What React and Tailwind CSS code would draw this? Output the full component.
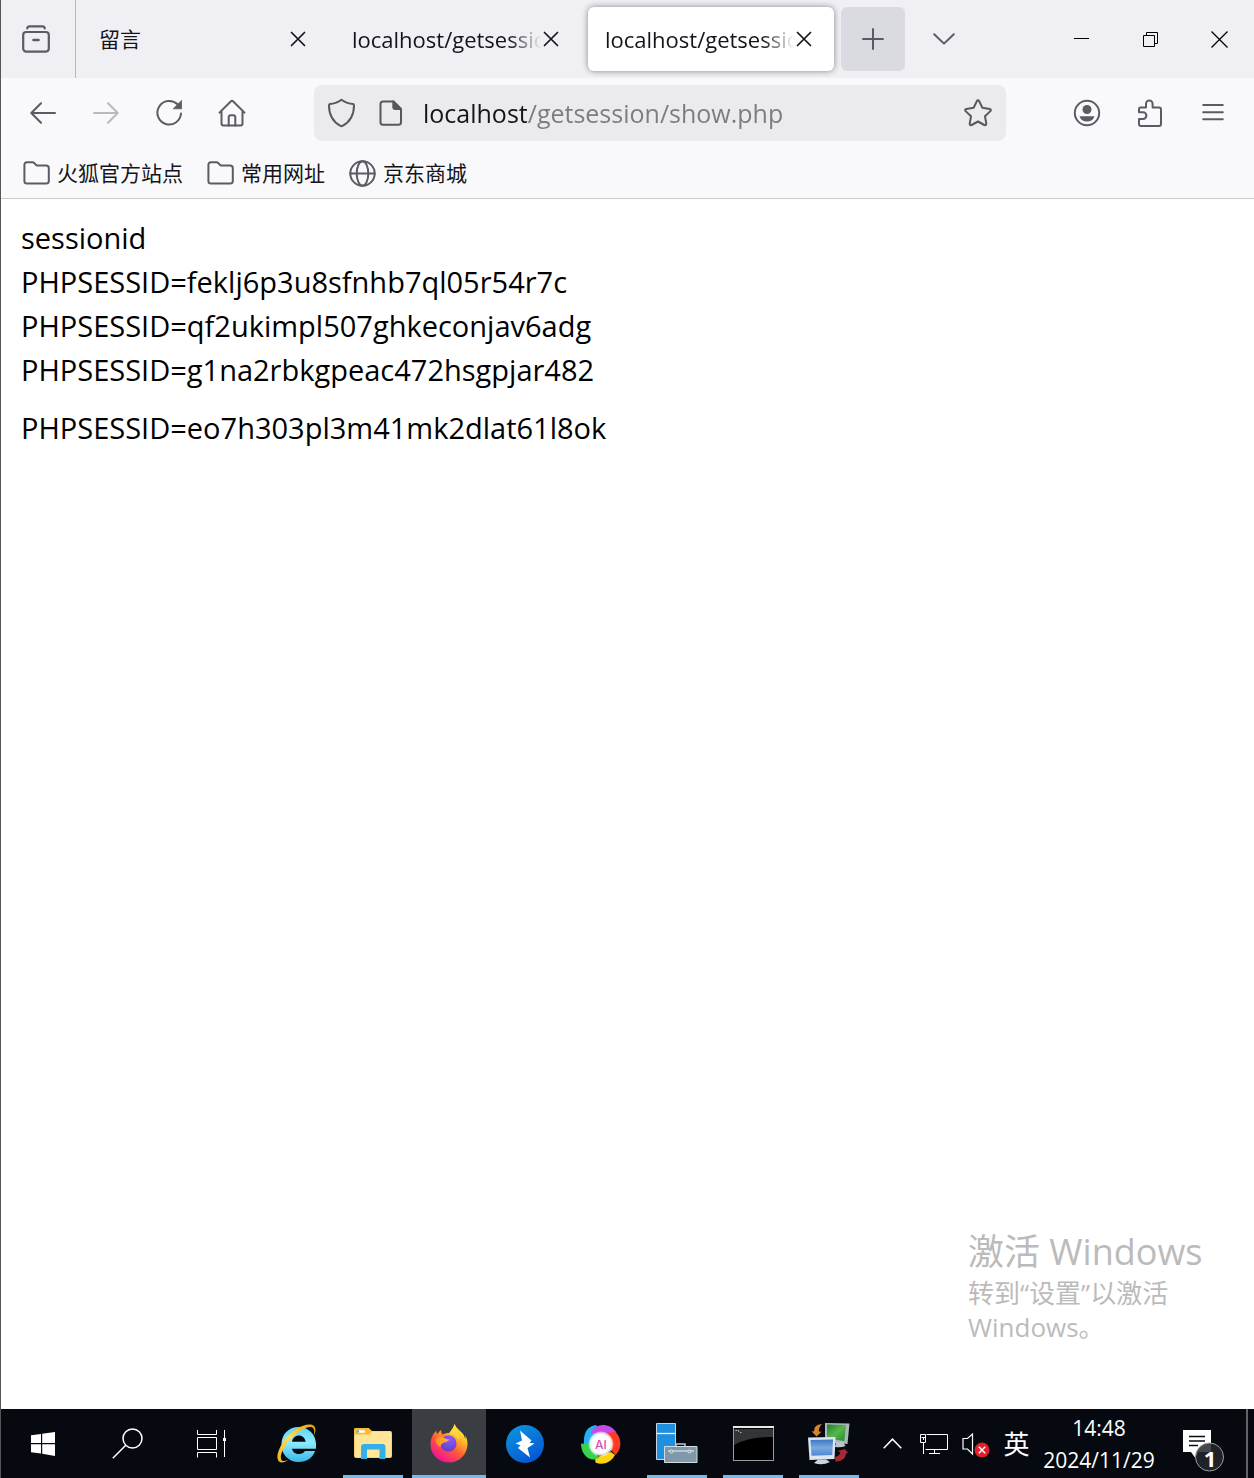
import React, { useState } from "react";

function Icon({ w, h, children, className = "", stroke = "currentColor", sw = 2 }) {
  return (
    <svg
      width={w}
      height={h}
      viewBox={`0 0 ${w} ${h}`}
      fill="none"
      stroke={stroke}
      strokeWidth={sw}
      strokeLinecap="round"
      strokeLinejoin="round"
      className={`shrink-0 ${className}`}
      aria-hidden="true"
    >
      {children}
    </svg>
  );
}

function Tab({ title, active, fade }) {
  return (
    <div
      className={
        active
          ? "flex h-16 w-[246px] min-w-0 items-center rounded-md bg-white pr-5 pl-[17px] shadow-[0_0_6px_rgba(0,0,0,0.45)]"
          : "flex h-16 w-[246px] min-w-0 items-center rounded-md pr-5 pl-[17px]"
      }
    >
      <span
        className={
          fade
            ? "min-w-0 flex-1 overflow-hidden text-[22px] leading-8 whitespace-nowrap [mask-image:linear-gradient(to_left,transparent,black_32px)]"
            : "min-w-0 flex-1 overflow-hidden text-[21px] leading-8 whitespace-nowrap"
        }
      >
        {title}
      </span>
      <button type="button" aria-label="关闭标签页" className="flex h-8 w-5 shrink-0 items-center justify-center">
        <Icon w={16} h={16} sw={1.7}>
          <path d="M1.5 1.5l13 13M14.5 1.5l-13 13" />
        </Icon>
      </button>
    </div>
  );
}

function ToolButton({ label, children, className = "" }) {
  return (
    <button type="button" aria-label={label} className={`flex h-14 w-[63px] items-center justify-center ${className}`}>
      {children}
    </button>
  );
}

function WindowButton({ label, children }) {
  return (
    <button type="button" aria-label={label} className="flex h-[78px] w-[69px] items-center justify-center text-black">
      {children}
    </button>
  );
}

function TabBar() {
  return (
    <header className="flex h-[78px] items-center bg-[#f0eff4] text-[#15141a]">
      <button
        type="button"
        aria-label="Firefox View"
        className="flex h-full w-[75px] shrink-0 items-center justify-center border-r border-[#b8b7bd] pr-1 text-[#5b5b66]"
      >
        <Icon w={28} h={28} sw={2.2}>
          <path d="M5.2 3.4C5.4 1.8 6.2 1.3 7.6 1.3h12.8c1.4 0 2.200.5 2.400 2.100" />
          <rect x="1.2" y="7" width="25.6" height="19.6" rx="3" />
          <path d="M11.5 15h5" strokeWidth="2.600" />
        </Icon>
      </button>
      <div className="flex min-w-0 flex-1 items-center gap-[7px] pl-1.5">
        <Tab title="留言" />
        <Tab title="localhost/getsession/" fade />
        <Tab title="localhost/getsession/show.php" fade active />
        <button
          type="button"
          aria-label="打开新标签页"
          className="flex h-16 w-16 shrink-0 items-center justify-center rounded-md bg-[#dadbe0] text-[#5b5b66]"
        >
          <Icon w={22} h={22}>
            <path d="M11 1v20M1 11h20" />
          </Icon>
        </button>
        <button type="button" aria-label="列出所有标签页" className="flex h-16 w-16 shrink-0 items-center justify-center text-[#5b5b66]">
          <Icon w={22} h={12}>
            <path d="M1.2 1.2L11 10.600l9.800-9.400" />
          </Icon>
        </button>
      </div>
      <div className="flex shrink-0">
        <WindowButton label="最小化">
          <svg width="15" height="2" viewBox="0 0 15 2" aria-hidden="true">
            <path d="M0 0h15v1H0z" />
          </svg>
        </WindowButton>
        <WindowButton label="还原">
          <svg width="15" height="15" viewBox="0 0 15 15" fill="none" stroke="black" aria-hidden="true">
            <path d="M.5 3.5h11v11H.5zM3.500 3V.5h11v11H12" />
          </svg>
        </WindowButton>
        <WindowButton label="关闭">
          <svg width="17" height="17" viewBox="0 0 17 17" fill="none" stroke="black" strokeWidth="1.300" aria-hidden="true">
            <path d="M.5.5l16 16M16.500.5l-16 16" />
          </svg>
        </WindowButton>
      </div>
    </header>
  );
}

function NavBar() {
  const [url, setUrl] = useState("localhost/getsession/show.php");
  return (
    <nav className="flex h-[70px] items-center px-2.5 text-[#5b5b66]">
      <ToolButton label="后退">
        <Icon w={26} h={22}>
          <path d="M25 11H1.500M11 1.300L1.300 11l9.700 9.700" />
        </Icon>
      </ToolButton>
      <ToolButton label="前进" className="text-[#b9b9be]">
        <Icon w={26} h={22}>
          <path d="M1 11h23.500M15 1.300l9.700 9.700-9.700 9.700" />
        </Icon>
      </ToolButton>
      <ToolButton label="重新载入">
        <Icon w={28} h={28}>
          <path d="M26 14.500A11.800 11.800 0 1 1 22.500 5.300" />
          <path d="M26.500 1.800v8h-8z" fill="currentColor" strokeWidth="0.800" />
        </Icon>
      </ToolButton>
      <ToolButton label="主页">
        <Icon w={28} h={28}>
          <path d="M1.500 13.600L13 2.200q1-1 2 0l11.500 11.400M3.500 12v12.500q0 2 2 2h17q2 0 2-2V12" />
          <path d="M10.700 26.500V18.500q0-2.200 2.200-2.200h2.200q2.200 0 2.200 2.200v8" />
        </Icon>
      </ToolButton>

      <div className="mr-[49px] ml-[51px] flex h-14 min-w-0 flex-1 items-center rounded-lg bg-[#ebebed] px-3.5 text-[#57575c]">
        <button type="button" aria-label="跟踪保护" className="shrink-0">
          <Icon w={27} h={30}>
            <path d="M13.500 1.800q6 4.200 11.500 4.200q1 .2 1 1.400c0 9-3.500 16-11.500 20.500q-1 .6-2 0C4.500 23.400 1 16.400 1 7.400Q1 6.200 2 6q5.500 0 11.500-4.200z" />
          </Icon>
        </button>
        <button type="button" aria-label="网站信息" className="ml-6 shrink-0">
          <Icon w={24} h={26}>
            <path d="M4 1.400h10.500l7.500 7.500v13.300q0 2.500-2.500 2.500H4q-2.500 0-2.500-2.500V3.900q0-2.500 2.500-2.500z" />
            <path d="M14.300 1.500v5.500q0 2 2 2h5.500z" fill="currentColor" />
          </Icon>
        </button>
        <input
          type="text"
          aria-label="地址栏"
          value={url}
          onChange={(e) => setUrl(e.target.value)}
          className="ml-5 h-12 min-w-0 flex-1 bg-[linear-gradient(90deg,#15141a_105px,#7b7b80_105px)] bg-clip-text text-[25px] text-transparent caret-[#15141a] outline-none"
        />
        <button type="button" aria-label="为此页添加书签" className="shrink-0">
          <Icon w={28} h={28}>
            <path d="M12.900 2.100q1.100-1.800 2.200 0l3.300 6.700 7.300 1.100q1.800.5.700 2.200l-5.400 5.200 1.300 7.400q0 1.900-1.900 1.300L14 22.500l-6.400 3.500q-1.900.6-1.900-1.300l1.300-7.400-5.400-5.200q-1.100-1.700.7-2.200l7.300-1.100z" />
          </Icon>
        </button>
      </div>

      <ToolButton label="账户">
        <Icon w={28} h={28}>
          <circle cx="14" cy="14" r="12.200" />
          <circle cx="14" cy="10.500" r="4.500" fill="currentColor" stroke="none" />
          <path d="M6.500 17.200h15q-1.800 5.300-7.500 5.300t-7.500-5.300z" fill="currentColor" stroke="none" />
        </Icon>
      </ToolButton>
      <ToolButton label="扩展">
        <Icon w={26} h={28}>
          <path d="M3.500 8.500H9V4.800a3.300 3.300 0 0 1 6.600 0v3.700h6.400q2 0 2 2v14.500q0 2-2 2H4q-2 0-2-2v-5h4a3.400 3.400 0 0 0 0-6.800H2v-2.700q0-2 1.500-2z" />
        </Icon>
      </ToolButton>
      <ToolButton label="打开应用程序菜单">
        <Icon w={22} h={20}>
          <path d="M1.200 2h19.600M1.200 9.200h19.600M1.200 16.300h19.600" />
        </Icon>
      </ToolButton>
    </nav>
  );
}

function FolderIcon() {
  return (
    <Icon w={27} h={24}>
      <path d="M4 1.200h5.500q1 0 1.700.8l2.300 2.400h9.700q2.600 0 2.600 2.600v13q0 2.600-2.600 2.600H4q-2.600 0-2.600-2.600V3.800Q1.400 1.200 4 1.200z" />
    </Icon>
  );
}

function GlobeIcon() {
  return (
    <Icon w={27} h={27}>
      <circle cx="13.500" cy="13.500" r="12.200" />
      <ellipse cx="13.500" cy="13.500" rx="5.800" ry="12.200" />
      <path d="M1.300 13.500h24.400" />
    </Icon>
  );
}

function Bookmarks() {
  const items = [
    { name: "火狐官方站点", icon: <FolderIcon /> },
    { name: "常用网址", icon: <FolderIcon /> },
    { name: "京东商城", icon: <GlobeIcon /> },
  ];
  return (
    <div className="flex h-[51px] items-center gap-6 border-b border-[#cccccc] pl-[22px] text-[#5b5b66]">
      {items.map((b) => (
        <a key={b.name} href="#" className="flex items-center gap-[7px]">
          {b.icon}
          <span className="text-[21px] leading-8 text-[#15141a]">{b.name}</span>
        </a>
      ))}
    </div>
  );
}

function WindowsLogo() {
  return (
    <svg width="24" height="24" viewBox="0 0 24 24" fill="white" aria-hidden="true">
      <path d="M0 3.200L10 1.900v9.200H0zM11.200 1.700L24 0v11.100H11.200zM0 12.200h10v9.300L0 20.300zM11.200 12.200H24V24l-12.800-2.200z" />
    </svg>
  );
}

function SearchGlyph() {
  return (
    <svg width="31" height="31" viewBox="0 0 31 31" fill="none" stroke="white" strokeWidth="1.500" aria-hidden="true">
      <circle cx="20.500" cy="10.500" r="9.500" />
      <path d="M13.500 17.500L.800 30.300" />
    </svg>
  );
}

function TaskViewGlyph() {
  return (
    <svg width="30" height="28" viewBox="0 0 30 28" fill="none" stroke="white" aria-hidden="true">
      <path d="M1.500 0v4.500h19V0M1.500 7.500h19v12h-19zM1.500 27.500v-5h19v5M28.500 0v27" />
      <path d="M27 8h3v3h-3z" fill="white" stroke="none" />
    </svg>
  );
}

function IeLogo() {
  return (
    <svg width="40" height="40" viewBox="0 0 40 40" fill="none" aria-hidden="true">
      <defs>
        <linearGradient id="ieBlue" x1="0" y1="0" x2="0" y2="1">
          <stop offset="0" stopColor="#5fd6f6" />
          <stop offset="0.450" stopColor="#8cecff" />
          <stop offset="1" stopColor="#38b6e8" />
        </linearGradient>
        <linearGradient id="ieGold" x1="0" y1="1" x2="1" y2="0">
          <stop offset="0" stopColor="#f6b01b" />
          <stop offset="0.500" stopColor="#ffdc5e" />
          <stop offset="1" stopColor="#eb9d0a" />
        </linearGradient>
      </defs>
      <path
        fillRule="evenodd"
        fill="url(#ieBlue)"
        d="M21.500 3C31.500 3 39 10.500 39 20.500v4.200H15c.7 3.300 3.500 5.300 7 5.300 2.800 0 4.800-1.200 6-3h10C36 33.500 30 38 21.500 38 11.500 38 4.500 30.500 4.500 20.500S11.500 3 21.500 3zM15 17.800h13.700c-.7-4-3.200-6.300-6.800-6.300s-6.200 2.300-6.900 6.300z"
      />
      <path
        fill="url(#ieGold)"
        d="M37 12c2-5.500 2-9.800-1.500-11C28-1.500 15 6 7.500 16 1 25 -1.500 34.500 2 37.500c2.500 2 6 .800 9-1.500-3 1.200-5.200 1.500-6.300.200C2 32.500 6 24.500 11.500 17.500 19 8.500 29.500 2 34.500 3c2.700.7 3.200 4 2.500 9z"
      />
    </svg>
  );
}

function ExplorerLogo() {
  return (
    <svg width="38" height="32" viewBox="0 0 38 32" aria-hidden="true">
      <path d="M0 2q0-2 2-2h12.500l3 3H36q2 0 2 2v23q0 2-2 2H2q-2 0-2-2z" fill="#f8d16c" />
      <path d="M0 6V2q0-2 2-2h12.500l3.500 3-3 3z" fill="#fbbd2d" />
      <path d="M1 7h14l3.500-3.500H37V29H1z" fill="#ffe595" />
      <rect x="2.500" y="2.300" width="8.500" height="2.400" rx="1" fill="white" />
      <rect x="2.500" y="2.300" width="2.500" height="2.400" rx="1" fill="#3ab5cf" />
      <path d="M7 31V19q0-3 3-3h18.500q3 0 3 3v12h-6v-9.500H13V31z" fill="#34afe8" />
    </svg>
  );
}

function FirefoxLogo() {
  return (
    <svg width="38" height="39" viewBox="0 0 38 39" aria-hidden="true">
      <defs>
        <linearGradient id="ffBody" x1="0.850" y1="0.050" x2="0.250" y2="0.950">
          <stop offset="0" stopColor="#fff44f" />
          <stop offset="0.300" stopColor="#ffb82b" />
          <stop offset="0.600" stopColor="#ff5a36" />
          <stop offset="1" stopColor="#f0119a" />
        </linearGradient>
        <radialGradient id="ffGlobe" cx="0.600" cy="0.250" r="0.800">
          <stop offset="0" stopColor="#9059ff" />
          <stop offset="1" stopColor="#5b3fc4" />
        </radialGradient>
        <linearGradient id="ffHead" x1="0" y1="0" x2="1" y2="0">
          <stop offset="0" stopColor="#ff8a1e" />
          <stop offset="1" stopColor="#ffbd2f" />
        </linearGradient>
      </defs>
      <path
        fill="url(#ffBody)"
        d="M24.500 0c-.8 4-3.500 6-5.500 9-2.500 0-4.500.500-6 1.500-1.500-1-2-2.300-1.800-4.500C9 7.500 8 9 7.500 10c-1-.8-1.300-2-1.200-3.500C2.500 10 .500 15 .500 20.500 .500 31 8.800 38.500 19 38.500S37.500 30.500 37.500 20c0-3-.700-6-2-8.500.100 1.500 0 2.500-.300 3.500-.800-4.500-3.500-6.500-6.200-9C27 4 25.500 2.500 24.500 0z"
      />
      <circle cx="18.500" cy="19.500" r="8" fill="url(#ffGlobe)" />
      <path fill="#ffd83b" d="M24.500 0c-.8 4-3.500 6-4.500 10 3.500.3 6.500 2 8 5.500 2.500-4-.5-9-3.500-15.500z" />
      <path
        fill="url(#ffHead)"
        d="M5.500 15c2-3 5-3 7.500-1.800 1.500 1.300 3.500 1.800 6 2.300-.300 1.500-2.500 2.200-4 2.800-3 .8-4.500 2.500-4.500 5-3-1.300-5-4.300-5-8.300z"
      />
    </svg>
  );
}

function BoltLogo() {
  return (
    <svg width="38" height="38" viewBox="0 0 38 38" aria-hidden="true">
      <defs>
        <linearGradient id="boltBlue" x1="0" y1="0" x2="0.600" y2="1">
          <stop offset="0" stopColor="#0c99e0" />
          <stop offset="1" stopColor="#0758d2" />
        </linearGradient>
      </defs>
      <circle cx="19" cy="19" r="19" fill="url(#boltBlue)" />
      <path d="M14 5.500L25.500 15.500 23.500 17.700 28.500 18.500 21.500 23 24 32.500 12 23 14.500 20.300 9.500 18.500 16 15.500z" fill="white" />
    </svg>
  );
}

function AiLogo() {
  return (
    <svg width="40" height="40" viewBox="0 0 40 40" aria-hidden="true">
      <defs>
        <radialGradient id="aiGlow">
          <stop offset="0.700" stopColor="white" />
          <stop offset="0.850" stopColor="white" stopOpacity="0.800" />
          <stop offset="1" stopColor="white" stopOpacity="0" />
        </radialGradient>
      </defs>
      <path d="M3 21C2 9 6 2.500 15 1l6 7-12 12z" fill="#27b1f5" />
      <path d="M10 9C14-1 28-2 35.500 8.500L27 12z" fill="#c64be8" />
      <path d="M25 9l9.500-1C41 14 41 25 34.500 31L28 24z" fill="#fb3b22" />
      <path d="M14 34l16-6 4 3C30 39 21 41.500 14.500 38.500z" fill="#ffd40c" />
      <path d="M0 19.500L9 20l9 14-4 1.500C5 36 0 28 0 19.500z" fill="#39d34e" />
      <circle cx="20" cy="20" r="13" fill="url(#aiGlow)" />
      <text x="20" y="24.500" textAnchor="middle" fontFamily="Inter, sans-serif" fontSize="12" fontWeight="500" fill="#d94bb0">
        AI
      </text>
    </svg>
  );
}

function ServerLogo() {
  return (
    <svg width="42" height="41" viewBox="0 0 42 41" aria-hidden="true">
      <path d="M.5.5h19v36H.5z" fill="#1f8fdf" stroke="#c7d3de" />
      <path d="M1 10.500h18" stroke="white" strokeWidth="1.300" />
      <path d="M20 24v-3h9v3" fill="none" stroke="#b8c6d1" strokeWidth="1.500" />
      <path d="M8.500 23.500h32.500v16H8.500z" fill="#7f98aa" stroke="#d3dde4" />
      <path d="M12 28h26" stroke="#dce5ea" strokeWidth="1.200" />
      <circle cx="15.500" cy="28.500" r="1.500" fill="#7f98aa" stroke="#e5ecf0" />
      <circle cx="33.500" cy="28.500" r="1.500" fill="#7f98aa" stroke="#e5ecf0" />
    </svg>
  );
}

function ConsoleLogo() {
  return (
    <svg width="41" height="35" viewBox="0 0 41 35" aria-hidden="true">
      <rect x="0.500" y="0.500" width="40" height="34" fill="black" stroke="#9a9da0" />
      <path d="M1 3h39v8C25 11 12 13 1 19z" fill="#343536" />
      <path d="M0 0h41v2H0z" fill="#e6e8ea" />
      <path d="M2.500 4.500h1.500M5 4l1 2M7 6.500h1.500" stroke="#b5b5b5" />
    </svg>
  );
}

function RemoteLogo() {
  return (
    <svg width="42" height="42" viewBox="0 0 42 42" aria-hidden="true">
      <defs>
        <linearGradient id="scrGreen" x1="0" y1="0" x2="1" y2="1">
          <stop offset="0" stopColor="#1d7f28" />
          <stop offset="0.500" stopColor="#58b74e" />
          <stop offset="1" stopColor="#1f8a24" />
        </linearGradient>
        <linearGradient id="scrBlue" x1="0" y1="0" x2="0" y2="1">
          <stop offset="0" stopColor="#3d78c4" />
          <stop offset="0.500" stopColor="#79a9e0" />
          <stop offset="1" stopColor="#4d86d2" />
        </linearGradient>
      </defs>
      <path d="M17 0l24.500.5-2 20.500-13-1-9.500-5z" fill="#a9b8ba" />
      <path d="M19 1.500l19 .5-1.700 16L19 15.500z" fill="url(#scrGreen)" />
      <path d="M28 19h7l2.500 4q-5 2-10.500 1z" fill="#b9c7d2" />
      <path d="M0 14.500L27.500 14 26.500 36 1.500 37z" fill="#dbe6f2" />
      <path d="M2.500 17l22.500-.4-.7 15.400-20.800.8z" fill="url(#scrBlue)" />
      <path d="M10 36.500h8l4 2.500q-8 4-16 1z" fill="#c9d6e3" />
      <path d="M14 1q-8.500.5-8 7.500l-2.500-.2L8.500 13.500l5-4.800-2.700-.2Q10.500 4.500 14 1z" fill="#d98430" />
      <path d="M27.500 38.500q9 .5 11-8.500l2 .5L37 26l-7.500 2 2.800 1.300Q32 33 27 34z" fill="#a62832" />
    </svg>
  );
}

function TaskButton({ label, children, open, active }) {
  return (
    <button
      type="button"
      aria-label={label}
      className="relative flex h-full w-[76px] shrink-0 items-center justify-center px-px"
    >
      <span
        className={
          active
            ? "flex h-full w-full items-center justify-center bg-[#3a3d41]"
            : "flex h-full w-full items-center justify-center"
        }
      >
        {children}
      </span>
      {open && <span className="absolute bottom-0 left-2 h-[3px] w-[60px] bg-[#76b9ed]" />}
      {active && <span className="absolute bottom-0 left-px h-[3px] w-[74px] bg-[#76b9ed]" />}
    </button>
  );
}

function SystemButton({ label, children }) {
  return (
    <button type="button" aria-label={label} className="flex h-full w-[84px] shrink-0 items-center justify-center">
      {children}
    </button>
  );
}

function TaskBar() {
  return (
    <footer className="flex h-[69px] items-center bg-[#060a10] text-white">
      <SystemButton label="开始">
        <WindowsLogo />
      </SystemButton>
      <SystemButton label="搜索">
        <SearchGlyph />
      </SystemButton>
      <SystemButton label="任务视图">
        <TaskViewGlyph />
      </SystemButton>
      <div className="ml-1.5 flex h-full">
        <TaskButton label="Internet Explorer"><IeLogo /></TaskButton>
        <TaskButton label="文件资源管理器" open><ExplorerLogo /></TaskButton>
        <TaskButton label="Firefox" active><FirefoxLogo /></TaskButton>
        <TaskButton label="迅雷"><BoltLogo /></TaskButton>
        <TaskButton label="AI 助手"><AiLogo /></TaskButton>
        <TaskButton label="服务器管理器" open><ServerLogo /></TaskButton>
        <TaskButton label="命令提示符" open><ConsoleLogo /></TaskButton>
        <TaskButton label="远程桌面" open><RemoteLogo /></TaskButton>
      </div>
      <div className="ml-auto flex h-full items-center">
        <button type="button" aria-label="显示隐藏的图标" className="flex w-[42px] justify-center">
          <svg width="19" height="11" viewBox="0 0 19 11" fill="none" stroke="white" strokeWidth="1.500" aria-hidden="true">
            <path d="M.7 10.300L9.500 1.200l8.800 9.100" />
          </svg>
        </button>
        <button type="button" aria-label="网络" className="flex w-[42px] justify-center">
          <svg width="28" height="22" viewBox="0 0 28 22" fill="none" stroke="white" aria-hidden="true">
            <path d="M6.500 1.500h21v15H5.500M14.500 17v3M9 20.500h11M.5 1.500h5v8h-5zM3.500 9.500V21M1.500 4.500h4M3.500 5v2" />
          </svg>
        </button>
        <button type="button" aria-label="音量" className="flex w-[42px] justify-center">
          <svg width="28" height="26" viewBox="0 0 28 26" fill="none" stroke="white" strokeWidth="1.200" aria-hidden="true">
            <path d="M1 7.500h4.500l5-4.500v20l-5-5H1z" />
            <circle cx="20" cy="19" r="7.500" fill="#e0212b" stroke="none" />
            <path d="M16.800 15.800l6.400 6.400M23.200 15.800l-6.400 6.400" strokeWidth="1.500" />
          </svg>
        </button>
        <button type="button" className="flex w-[39px] justify-center text-[26px] leading-9">英</button>
        <button type="button" className="flex w-[126px] flex-col items-center text-[21px] leading-8">
          <span>14:48</span>
          <span>2024/11/29</span>
        </button>
        <button type="button" aria-label="操作中心" className="relative ml-5 h-14 w-[42px]">
          <svg width="42" height="56" viewBox="0 0 42 56" aria-hidden="true">
            <path d="M1 14h28v22H16.500l-3.500 5.500L9 36H1z" fill="white" />
            <path d="M7 20.500h16M7 25h16M7 29.500h9" stroke="#060a10" strokeWidth="1.500" />
            <circle cx="27.500" cy="41" r="14" fill="#25282c" fillOpacity="0.850" stroke="#9a9da0" />
          </svg>
          <span className="absolute right-0 bottom-0 w-7 text-center text-[22px] leading-7 font-bold">1</span>
        </button>
        <button type="button" aria-label="显示桌面" className="ml-[22px] h-full w-2 border-l-2 border-[#5f6266]" />
      </div>
    </footer>
  );
}

export default function App() {
  const sessions = [
    "PHPSESSID=feklj6p3u8sfnhb7ql05r54r7c",
    "PHPSESSID=qf2ukimpl507ghkeconjav6adg",
    "PHPSESSID=g1na2rbkgpeac472hsgpjar482",
  ];
  return (
    <div
      lang="zh-CN"
      className="flex min-h-screen flex-col border-l border-[#55565a] bg-white font-['Open_Sans','Noto_Sans_CJK_SC',sans-serif]"
    >
      <div className="bg-[#f9f9fb]">
        <TabBar />
        <NavBar />
        <Bookmarks />
      </div>
      <main className="relative flex-1 px-5 pt-[17px] text-[29px] leading-11 text-black">
        <p>sessionid</p>
        {sessions.map((s) => (
          <p key={s}>{s}</p>
        ))}
        <p className="mt-3.5">PHPSESSID=eo7h303pl3m41mk2dlat61l8ok</p>
        <aside className="absolute right-10 bottom-[65px] w-[246px] text-[#bbbbbb]">
          <p className="text-4xl leading-12 whitespace-nowrap">激活 Windows</p>
          <p className="text-[26px] leading-[34px]">转到“设置”以激活 Windows。</p>
        </aside>
      </main>
      <TaskBar />
    </div>
  );
}
